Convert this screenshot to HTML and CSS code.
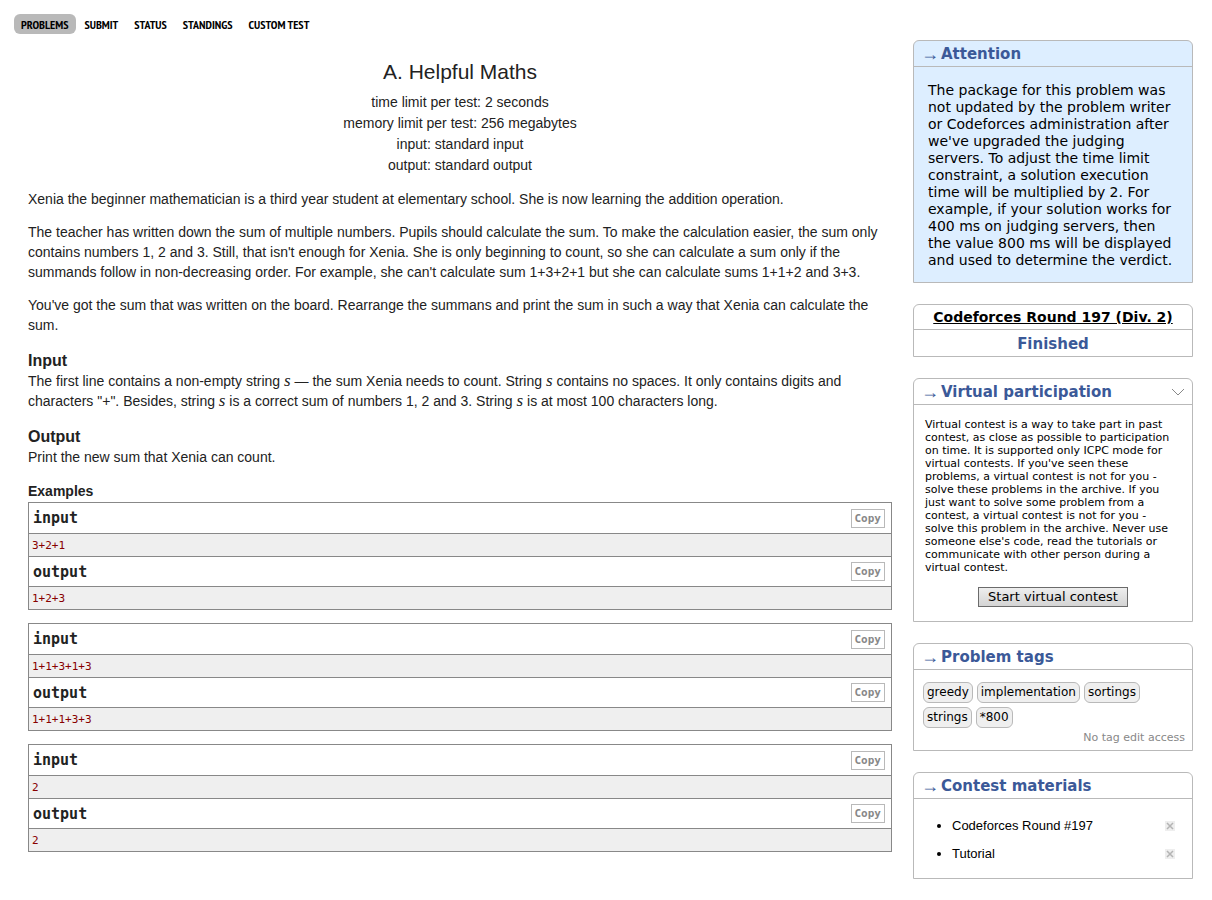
FILE: index.html
```html
<!DOCTYPE html>
<html lang="en">
<head>
<meta charset="utf-8">
<title>Problem - A - Helpful Maths</title>
<link rel="stylesheet" href="styles.css">
</head>
<body>
<nav class="menu">
  <a class="menu-link current" href="#">PROBLEMS</a>
  <a class="menu-link" href="#">SUBMIT</a>
  <a class="menu-link" href="#">STATUS</a>
  <a class="menu-link" href="#">STANDINGS</a>
  <a class="menu-link" href="#">CUSTOM TEST</a>
</nav>
<div class="page">
  <main class="statement">
    <header class="head">
      <h1 class="title">A. Helpful Maths</h1>
      <div>time limit per test: 2 seconds</div>
      <div>memory limit per test: 256 megabytes</div>
      <div>input: standard input</div>
      <div>output: standard output</div>
    </header>
    <div class="legend">
      <p>Xenia the beginner mathematician is a third year student at elementary school. She is now learning the addition operation.</p>
      <p>The teacher has written down the sum of multiple numbers. Pupils should calculate the sum. To make the calculation easier, the sum only contains numbers 1, 2 and 3. Still, that isn't enough for Xenia. She is only beginning to count, so she can calculate a sum only if the summands follow in non-decreasing order. For example, she can't calculate sum 1+3+2+1 but she can calculate sums 1+1+2 and 3+3.</p>
      <p>You've got the sum that was written on the board. Rearrange the summans and print the sum in such a way that Xenia can calculate the sum.</p>
    </div>
    <section class="spec">
      <h2 class="spec-title">Input</h2>
      <p>The first line contains a non-empty string <i class="var">s</i> — the sum Xenia needs to count. String <i class="var">s</i> contains no spaces. It only contains digits and characters "+". Besides, string <i class="var">s</i> is a correct sum of numbers 1, 2 and 3. String <i class="var">s</i> is at most 100 characters long.</p>
    </section>
    <section class="spec">
      <h2 class="spec-title">Output</h2>
      <p>Print the new sum that Xenia can count.</p>
    </section>
    <section class="examples">
      <h2 class="examples-title">Examples</h2>
      <div class="sample">
        <div class="sample-head"><h3>input</h3><button class="copy" type="button">Copy</button></div>
        <pre>3+2+1</pre>
        <div class="sample-head out"><h3>output</h3><button class="copy" type="button">Copy</button></div>
        <pre>1+2+3</pre>
      </div>
      <div class="sample">
        <div class="sample-head"><h3>input</h3><button class="copy" type="button">Copy</button></div>
        <pre>1+1+3+1+3</pre>
        <div class="sample-head out"><h3>output</h3><button class="copy" type="button">Copy</button></div>
        <pre>1+1+1+3+3</pre>
      </div>
      <div class="sample">
        <div class="sample-head"><h3>input</h3><button class="copy" type="button">Copy</button></div>
        <pre>2</pre>
        <div class="sample-head out"><h3>output</h3><button class="copy" type="button">Copy</button></div>
        <pre>2</pre>
      </div>
    </section>
  </main>
  <aside class="sidebar">
    <section class="box notice">
      <h2 class="caption"><span class="arrow">→</span>Attention</h2>
      <p class="notice-text">The package for this problem was not updated by the problem writer or Codeforces administration after we've upgraded the judging servers. To adjust the time limit constraint, a solution execution time will be multiplied by 2. For example, if your solution works for 400 ms on judging servers, then the value 800 ms will be displayed and used to determine the verdict.</p>
    </section>
    <section class="box contest">
      <h2 class="contest-name"><a href="#">Codeforces Round 197 (Div. 2)</a></h2>
      <div class="contest-state">Finished</div>
    </section>
    <section class="box">
      <h2 class="caption"><span class="arrow">→</span>Virtual participation
        <button class="fold" type="button" aria-label="Collapse"><svg width="14" height="9" viewBox="0 0 14 9"><path d="M1 1l6 6 6-6" fill="none" stroke="#888" stroke-width="1"/></svg></button></h2>
      <p class="virtual-text">Virtual contest is a way to take part in past contest, as close as possible to participation on time. It is supported only ICPC mode for virtual contests. If you've seen these problems, a virtual contest is not for you - solve these problems in the archive. If you just want to solve some problem from a contest, a virtual contest is not for you - solve this problem in the archive. Never use someone else's code, read the tutorials or communicate with other person during a virtual contest.</p>
      <div class="virtual-action"><button class="start" type="button">Start virtual contest</button></div>
    </section>
    <section class="box">
      <h2 class="caption"><span class="arrow">→</span>Problem tags</h2>
      <div class="tags">
        <span class="tag">greedy</span><span class="tag">implementation</span><span class="tag">sortings</span><span class="tag">strings</span><span class="tag">*800</span>
      </div>
      <div class="tag-note">No tag edit access</div>
    </section>
    <section class="box">
      <h2 class="caption"><span class="arrow">→</span>Contest materials</h2>
      <ul class="materials">
        <li><div class="material"><a href="#">Codeforces Round #197</a><button class="remove" type="button" aria-label="Remove"><svg width="10" height="10" viewBox="0 0 10 10"><path d="M2 2l6 6M8 2l-6 6" stroke="#b4b4b4" stroke-width="1.5"/></svg></button></div></li>
        <li><div class="material"><a href="#">Tutorial</a><button class="remove" type="button" aria-label="Remove"><svg width="10" height="10" viewBox="0 0 10 10"><path d="M2 2l6 6M8 2l-6 6" stroke="#b4b4b4" stroke-width="1.5"/></svg></button></div></li>
      </ul>
    </section>
  </aside>
</div>
</body>
</html>
```
FILE: styles.css
```css
* { box-sizing: border-box; }
body {
  margin: 0;
  padding: 14px 19px 20px 14px;
  background: #fff;
  color: #000;
  font-family: "DejaVu Sans", Verdana, sans-serif;
}
h1, h2, h3, p, pre, ul { margin: 0; padding: 0; }
button { margin: 0; padding: 0; cursor: pointer; }
a { color: #000; }

.menu { display: flex; gap: 1px; }
.menu-link {
  padding: 1px 8px 0 7px;
  border-radius: 6px;
  font: bold 12px/19px "Liberation Sans Narrow", "PT Sans Narrow", sans-serif;
  text-decoration: none;
}
.current { background: #b9b9b9; }

.page { display: flex; align-items: flex-start; gap: 21px; padding-top: 6px; }

.statement {
  flex: 1;
  min-width: 0;
  padding: 18px 0 0 14px;
  color: #222;
  font: 14px/20px "Liberation Sans", Arial, sans-serif;
}
.head { text-align: center; line-height: 21px; }
.title { padding-bottom: 6px; font-size: 21px; font-weight: normal; line-height: 28px; }
.legend { padding-top: 13px; }
.legend p { margin-bottom: 13px; }
.spec { padding-top: 3px; margin-bottom: 13px; }
.spec-title { font-size: 16px; line-height: 20px; }
.var { font: italic 17px/16px "Liberation Serif", serif; }
.examples-title { font-size: 14px; line-height: 21px; }
.examples { padding-top: 1px; }
.sample { margin-bottom: 13px; border: 1px solid #888; border-bottom: 0; }
.sample-head {
  display: flex;
  align-items: center;
  justify-content: space-between;
  height: 31px;
  padding: 0 6px 0 4px;
  border-bottom: 1px solid #888;
}
.out { height: 30px; }
.sample h3 { font: bold 15px/20px "DejaVu Sans Mono", monospace; }
.sample pre {
  padding: 1px 3px 0;
  border-bottom: 1px solid #888;
  background: #efefef;
  color: #880000;
  font: 11px/21px "DejaVu Sans Mono", monospace;
}
.copy {
  padding: 0 3px;
  border: 1px solid #b9b9b9;
  background: #fff;
  color: #888;
  font: bold 11px/17px "DejaVu Sans Mono", monospace;
}

.sidebar { display: flex; flex-direction: column; gap: 21px; width: 280px; }
.box { border: 1px solid #b9b9b9; border-radius: 6px 6px 0 0; }
.caption {
  display: flex;
  align-items: center;
  padding: 2px 7px 0;
  border-bottom: 1px solid #b9b9b9;
  color: #3b5998;
  font-size: 15px;
  line-height: 23px;
}
.arrow { width: 20px; font: 18px/21px "Liberation Serif", serif; }
.notice { background: #def; }
.notice-text { padding: 15px 14px 13px; font-size: 14px; line-height: 17px; }
.contest { text-align: center; }
.contest-name { border-bottom: 1px solid #b9b9b9; font-size: 14px; line-height: 24px; }
.contest-state { padding-top: 2px; color: #3b5998; font-size: 15px; font-weight: bold; line-height: 24px; }
.fold { display: flex; margin-left: auto; border: 0; background: none; }
.virtual-text { padding: 13px 15px 0 11px; font-size: 11px; line-height: 13px; }
.virtual-action { padding: 12px 0 14px; text-align: center; }
.start {
  padding: 0 9px;
  border: 1px solid #6b6b6b;
  background: linear-gradient(#eee, #d4d4d4);
  font: 13px/18px "DejaVu Sans", Verdana, sans-serif;
}
.tags { display: flex; flex-wrap: wrap; gap: 4px; padding: 12px 9px 0; }
.tag {
  padding: 0 3px;
  border: 1px solid #b9b9b9;
  border-radius: 6px;
  background: #efefef;
  font-size: 12px;
  line-height: 19px;
}
.tag-note { padding: 2px 7px 5px; color: #888; font-size: 11px; line-height: 15px; text-align: right; }
.materials { padding: 13px 17px 10px 38px; font: 13px/28px "Liberation Sans", Arial, sans-serif; }
.material { display: flex; align-items: center; justify-content: space-between; }
.materials a { text-decoration: none; }
.remove { display: flex; border: 0; background: #eee; }
```
